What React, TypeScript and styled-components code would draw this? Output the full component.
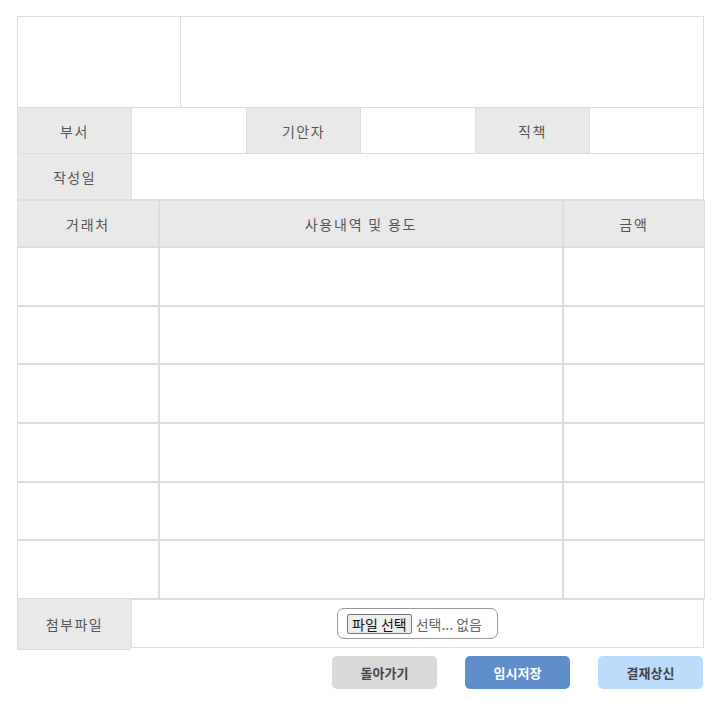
import React from "react"
import styled, { createGlobalStyle } from "styled-components"

const GlobalStyle = createGlobalStyle`
  body {
    margin: 0;
    background: #fff;
    font-family: "Noto Sans CJK KR", "Noto Sans", sans-serif;
    color: #555;
  }
`

const Page = styled.div`
  padding: 16px 0 0 17px;
  width: 687px;
`

const TopBlock = styled.div`
  display: flex;
  height: 92px;
  box-sizing: border-box;
  border: 1px solid #ddd;
`

const StampCell = styled.div`
  width: 162px;
  border-right: 1px solid #ddd;
`

const TitleCell = styled.div`
  flex: 1;
`

const InfoRow = styled.div<{ $cols: string }>`
  display: grid;
  grid-template-columns: ${(p) => p.$cols};
  height: 46px;
  box-sizing: border-box;
  border: 1px solid #ddd;
  border-top: none;
`

const Label = styled.div`
  display: flex;
  align-items: center;
  justify-content: center;
  background: #e9e9e9;
  font-size: 14px;
  letter-spacing: 1.5px;
  color: #555;
  border-right: 1px solid #ddd;
`

const Value = styled.div<{ $last?: boolean }>`
  background: #fff;
  border-right: ${(p) => (p.$last ? "none" : "1px solid #ddd")};
`

const ItemTable = styled.div`
  display: grid;
  grid-template-columns: 142px 404px 142px;
  grid-template-rows: 47px repeat(6, 58.67px);
  width: 688px;
`

const HeadCell = styled.div`
  display: flex;
  align-items: center;
  justify-content: center;
  box-sizing: border-box;
  background: #e9e9e9;
  border: 1px solid #ddd;
  font-size: 14px;
  letter-spacing: 1.8px;
  color: #555;
`

const BodyCell = styled.div`
  box-sizing: border-box;
  border: 1px solid #ddd;
  background: #fff;
`

const AttachRow = styled.div`
  display: flex;
  align-items: flex-start;
`

const AttachLabel = styled(Label)`
  width: 114px;
  height: 51px;
  box-sizing: border-box;
  border: 1px solid #ddd;
  border-top: none;
  border-right: none;
`

const AttachValue = styled.div`
  flex: 1;
  height: 49px;
  box-sizing: border-box;
  border: 1px solid #ddd;
  display: flex;
  align-items: center;
  justify-content: center;
  padding-top: 1px;
`

const FileBox = styled.div`
  display: flex;
  align-items: center;
  gap: 4px;
  height: 31px;
  box-sizing: border-box;
  padding: 0 15px 0 9px;
  border: 1px solid #999;
  border-radius: 7px;
  font-size: 14px;
  color: #666;
`

const FileButton = styled.span`
  display: inline-flex;
  align-items: center;
  height: 20px;
  box-sizing: border-box;
  padding: 0 4px;
  background: #efefef;
  border: 1px solid #767676;
  border-radius: 2px;
  color: #111;
  font-size: 14px;
`

const ButtonBar = styled.div`
  display: flex;
  justify-content: flex-end;
  gap: 28px;
  margin: 6px 1px 0 0;
`

const ActionButton = styled.button<{ $bg: string; $fg: string }>`
  width: 105px;
  height: 33px;
  border: none;
  border-radius: 5px;
  background: ${(p) => p.$bg};
  color: ${(p) => p.$fg};
  font-family: "Noto Sans CJK KR", "Noto Sans", sans-serif;
  font-size: 13px;
  font-weight: 700;
  cursor: pointer;
`

const App = () => {
  const rows = Array.from({ length: 6 })
  return (
    <Page>
      <GlobalStyle />
      <TopBlock>
        <StampCell />
        <TitleCell />
      </TopBlock>
      <InfoRow $cols="114px 115px 114px 115px 114px 1fr">
        <Label>부서</Label>
        <Value />
        <Label>기안자</Label>
        <Value />
        <Label>직책</Label>
        <Value $last />
      </InfoRow>
      <InfoRow $cols="114px 1fr">
        <Label>작성일</Label>
        <Value $last />
      </InfoRow>
      <ItemTable>
        <HeadCell>거래처</HeadCell>
        <HeadCell>사용내역 및 용도</HeadCell>
        <HeadCell>금액</HeadCell>
        {rows.map((_, i) => (
          <React.Fragment key={i}>
            <BodyCell />
            <BodyCell />
            <BodyCell />
          </React.Fragment>
        ))}
      </ItemTable>
      <AttachRow>
        <AttachLabel>첨부파일</AttachLabel>
        <AttachValue>
          <FileBox>
            <FileButton>파일 선택</FileButton>
            <span>선택... 없음</span>
          </FileBox>
        </AttachValue>
      </AttachRow>
      <ButtonBar>
        <ActionButton $bg="#d9d9d9" $fg="#444">돌아가기</ActionButton>
        <ActionButton $bg="#5f8fcb" $fg="#fff">임시저장</ActionButton>
        <ActionButton $bg="#bcdcfd" $fg="#444">결재상신</ActionButton>
      </ButtonBar>
    </Page>
  )
}

export default App
